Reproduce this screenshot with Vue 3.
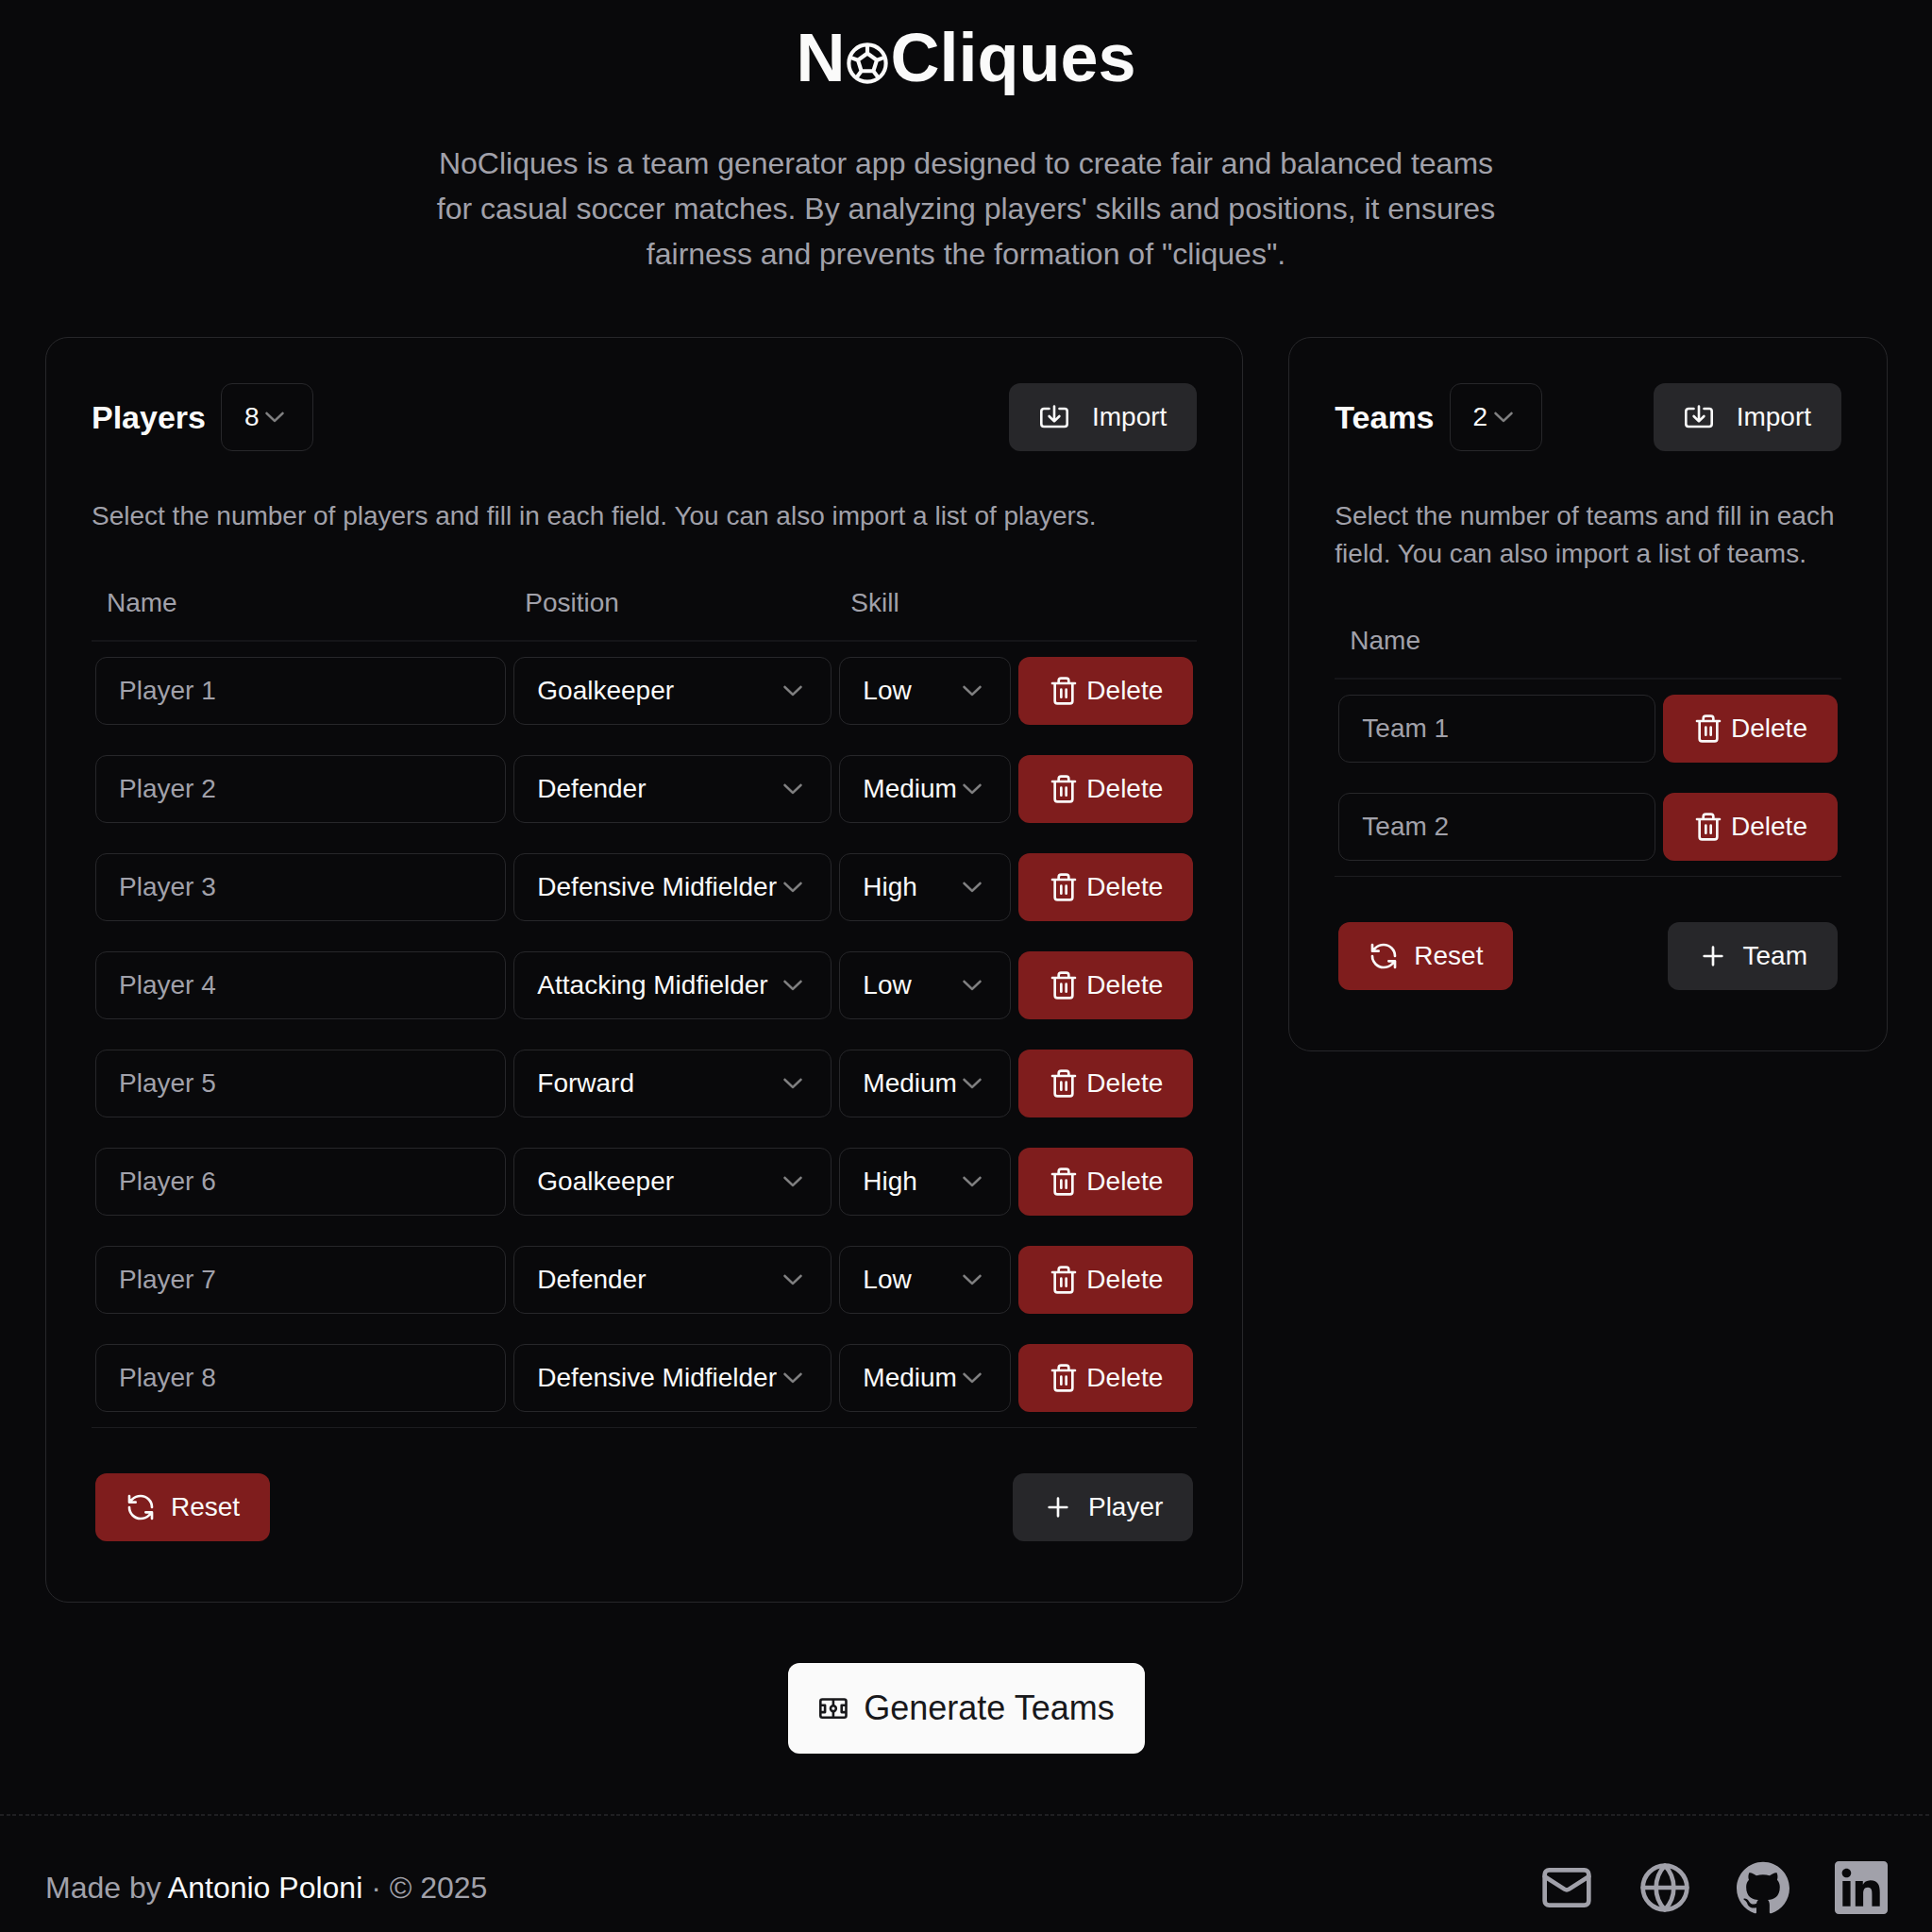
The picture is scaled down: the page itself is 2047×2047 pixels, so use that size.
<script setup>
import { ref } from 'vue'

const positions = ['Goalkeeper', 'Defender', 'Defensive Midfielder', 'Attacking Midfielder', 'Forward']
const skills = ['Low', 'Medium', 'High']

const makePlayer = (i) => ({
  id: i + 1,
  name: '',
  position: positions[i % positions.length],
  skill: skills[i % skills.length],
})
const makeTeam = (i) => ({ id: i + 1, name: '' })

const makeList = (n, make) => Array.from({ length: n }, (_, i) => make(i))

const players = ref(makeList(8, makePlayer))
const teams = ref(makeList(2, makeTeam))

const setPlayers = (n) => { players.value = makeList(Number(n), makePlayer) }
const setTeams = (n) => { teams.value = makeList(Number(n), makeTeam) }
</script>

<template>
  <div class="page">
    <svg class="sprite" aria-hidden="true">
      <symbol id="chevron" viewBox="0 0 15 15">
        <path fill="currentColor" stroke="currentColor" stroke-width="0.2" d="M3.13523 6.15803C3.3241 5.95657 3.64052 5.94637 3.84197 6.13523L7.5 9.56464L11.158 6.13523C11.3595 5.94637 11.6759 5.95657 11.8648 6.15803C12.0536 6.35949 12.0434 6.67591 11.842 6.86477L7.84197 10.6148C7.64964 10.7951 7.35036 10.7951 7.15803 10.6148L3.15803 6.86477C2.95657 6.67591 2.94637 6.35949 3.13523 6.15803Z" />
      </symbol>
      <symbol id="import" viewBox="0 0 32 32">
        <g fill="none" stroke="currentColor" stroke-width="2.6" stroke-linecap="round" stroke-linejoin="round">
          <path d="M10.5 7H5a2.7 2.7 0 0 0-2.7 2.7v13.6A2.7 2.7 0 0 0 5 26h22a2.7 2.7 0 0 0 2.7-2.7V9.7A2.7 2.7 0 0 0 27 7h-5.5" />
          <path d="M16 4.5V20.2M10.6 15L16 20.4L21.4 15" />
        </g>
      </symbol>
      <symbol id="trash" viewBox="0 0 24 24">
        <path fill="none" stroke="currentColor" stroke-width="2" stroke-linecap="round" stroke-linejoin="round" d="M3 6h18M19 6v14a2 2 0 0 1-2 2H7a2 2 0 0 1-2-2V6M8 6V4a2 2 0 0 1 2-2h4a2 2 0 0 1 2 2v2M10 11v6M14 11v6" />
      </symbol>
      <symbol id="refresh" viewBox="0 0 24 24">
        <path fill="none" stroke="currentColor" stroke-width="2" stroke-linecap="round" stroke-linejoin="round" d="M21 12a9 9 0 0 0-9-9 9.75 9.75 0 0 0-6.74 2.74L3 8M3 3v5h5M3 12a9 9 0 0 0 9 9 9.75 9.75 0 0 0 6.74-2.74L21 16M16 16h5v5" />
      </symbol>
      <symbol id="plus" viewBox="0 0 24 24">
        <path fill="none" stroke="currentColor" stroke-width="2" stroke-linecap="round" d="M5 12h14M12 5v14" />
      </symbol>
    </svg>

    <header class="intro">
      <h1 class="logo">N<svg class="ball" viewBox="1 1 22 22" role="img" aria-label="o"><g fill="none" stroke="currentColor" stroke-width="1.9" stroke-linejoin="round"><circle cx="12" cy="12" r="9" /><path d="M12 7.200l4.600 3.300l-1.700 5.300h-5.800l-1.700-5.300zM12 7.200V3M14.900 15.800l2.400 3.200M16.600 10.500l3.900-1.400M9.100 15.800l-2.400 3.200M7.400 10.500l-3.900-1.400" /></g></svg>Cliques</h1>
      <p class="lead">NoCliques is a team generator app designed to create fair and balanced teams for casual soccer matches. By analyzing players' skills and positions, it ensures fairness and prevents the formation of "cliques".</p>
    </header>

    <main class="main">
      <div class="cards">
        <section class="card">
          <div class="card-head">
            <div class="card-title">
              <h2><label for="player-count">Players</label></h2>
              <div class="select count">
                <select id="player-count" :value="players.length" @change="setPlayers($event.target.value)">
                  <option v-for="n in 22" :key="n" :value="n">{{ n }}</option>
                </select>
                <svg class="icon chevron"><use href="#chevron" /></svg>
              </div>
            </div>
            <button type="button" class="btn secondary wide-gap"><svg class="icon"><use href="#import" /></svg>Import</button>
          </div>
          <p class="hint">Select the number of players and fill in each field. You can also import a list of players.</p>
          <table>
            <colgroup>
              <col />
              <col class="col-position" />
              <col class="col-skill" />
              <col class="col-delete" />
            </colgroup>
            <thead>
              <tr><th scope="col">Name</th><th scope="col">Position</th><th scope="col">Skill</th><th></th></tr>
            </thead>
            <tbody>
              <tr v-for="(p, i) in players" :key="p.id">
                <td><input v-model="p.name" type="text" :placeholder="`Player ${i + 1}`" :aria-label="`Player ${i + 1} name`" /></td>
                <td>
                  <div class="select">
                    <select v-model="p.position" :aria-label="`Player ${i + 1} position`">
                      <option v-for="o in positions" :key="o">{{ o }}</option>
                    </select>
                    <svg class="icon chevron"><use href="#chevron" /></svg>
                  </div>
                </td>
                <td>
                  <div class="select">
                    <select v-model="p.skill" :aria-label="`Player ${i + 1} skill`">
                      <option v-for="o in skills" :key="o">{{ o }}</option>
                    </select>
                    <svg class="icon chevron"><use href="#chevron" /></svg>
                  </div>
                </td>
                <td><button type="button" class="btn danger tight" @click="players.splice(i, 1)"><svg class="icon"><use href="#trash" /></svg>Delete</button></td>
              </tr>
            </tbody>
          </table>
          <div class="card-foot">
            <button type="button" class="btn danger" @click="setPlayers(8)"><svg class="icon"><use href="#refresh" /></svg>Reset</button>
            <button type="button" class="btn secondary" @click="players.push(makePlayer(players.length))"><svg class="icon"><use href="#plus" /></svg>Player</button>
          </div>
        </section>

        <section class="card">
          <div class="card-head">
            <div class="card-title">
              <h2><label for="team-count">Teams</label></h2>
              <div class="select count">
                <select id="team-count" :value="teams.length" @change="setTeams($event.target.value)">
                  <option v-for="n in 8" :key="n" :value="n">{{ n }}</option>
                </select>
                <svg class="icon chevron"><use href="#chevron" /></svg>
              </div>
            </div>
            <button type="button" class="btn secondary wide-gap"><svg class="icon"><use href="#import" /></svg>Import</button>
          </div>
          <p class="hint">Select the number of teams and fill in each field. You can also import a list of teams.</p>
          <table>
            <colgroup>
              <col />
              <col class="col-delete" />
            </colgroup>
            <thead>
              <tr><th scope="col">Name</th><th></th></tr>
            </thead>
            <tbody>
              <tr v-for="(t, i) in teams" :key="t.id">
                <td><input v-model="t.name" type="text" :placeholder="`Team ${i + 1}`" :aria-label="`Team ${i + 1} name`" /></td>
                <td><button type="button" class="btn danger tight" @click="teams.splice(i, 1)"><svg class="icon"><use href="#trash" /></svg>Delete</button></td>
              </tr>
            </tbody>
          </table>
          <div class="card-foot">
            <button type="button" class="btn danger" @click="setTeams(2)"><svg class="icon"><use href="#refresh" /></svg>Reset</button>
            <button type="button" class="btn secondary" @click="teams.push(makeTeam(teams.length))"><svg class="icon"><use href="#plus" /></svg>Team</button>
          </div>
        </section>
      </div>

      <button type="button" class="btn generate">
        <svg class="icon" viewBox="0 0 32 32" fill="none" stroke="currentColor" stroke-width="2.6" stroke-linejoin="round">
          <rect x="2.3" y="6.5" width="27.2" height="19.3" rx="2" />
          <path d="M15.9 6.5v6.8M15.9 19.2v6.6M2.3 12.7h4.8v7.4H2.3M29.5 12.7h-4.8v7.4h4.8" />
          <circle cx="15.9" cy="16.2" r="2.9" />
        </svg>Generate Teams
      </button>
    </main>

    <footer class="footer">
      <p>Made by <a href="#author">Antonio Poloni</a> · © 2025</p>
      <nav class="links" aria-label="Contact">
        <a href="#mail" aria-label="Email">
          <svg viewBox="0 0 24 24" fill="none" stroke="currentColor" stroke-width="2" stroke-linecap="round" stroke-linejoin="round"><rect x="2" y="4" width="20" height="16" rx="2" /><path d="M22 7l-8.97 5.7a1.94 1.94 0 0 1-2.06 0L2 7" /></svg>
        </a>
        <a href="#website" aria-label="Website">
          <svg viewBox="0 0 24 24" fill="none" stroke="currentColor" stroke-width="2" stroke-linecap="round" stroke-linejoin="round"><circle cx="12" cy="12" r="10" /><path d="M12 2a14.5 14.5 0 0 0 0 20 14.5 14.5 0 0 0 0-20M2 12h20" /></svg>
        </a>
        <a href="#github" aria-label="GitHub">
          <svg viewBox="0 0 24 24" fill="currentColor"><path d="M12 .297c-6.63 0-12 5.373-12 12 0 5.303 3.438 9.8 8.205 11.385.6.113.82-.258.82-.577 0-.285-.01-1.04-.015-2.04-3.338.724-4.042-1.61-4.042-1.61C4.422 18.07 3.633 17.7 3.633 17.7c-1.087-.744.084-.729.084-.729 1.205.084 1.838 1.236 1.838 1.236 1.07 1.835 2.809 1.305 3.495.998.108-.776.417-1.305.76-1.605-2.665-.3-5.466-1.332-5.466-5.93 0-1.31.465-2.38 1.235-3.22-.135-.303-.54-1.523.105-3.176 0 0 1.005-.322 3.3 1.23.96-.267 1.98-.399 3-.405 1.02.006 2.04.138 3 .405 2.28-1.552 3.285-1.23 3.285-1.23.645 1.653.24 2.873.12 3.176.765.84 1.23 1.91 1.23 3.22 0 4.61-2.805 5.625-5.475 5.92.42.36.81 1.096.81 2.22 0 1.606-.015 2.896-.015 3.286 0 .315.21.69.825.57C20.565 22.092 24 17.592 24 12.297c0-6.627-5.373-12-12-12" /></svg>
        </a>
        <a href="#linkedin" aria-label="LinkedIn">
          <svg viewBox="0 0 24 24" fill="currentColor"><path d="M20.447 20.452h-3.554v-5.569c0-1.328-.027-3.037-1.852-3.037-1.853 0-2.136 1.445-2.136 2.939v5.667H9.351V9h3.414v1.561h.046c.477-.9 1.637-1.85 3.37-1.85 3.601 0 4.267 2.37 4.267 5.455v6.286zM5.337 7.433c-1.144 0-2.063-.926-2.063-2.065 0-1.138.92-2.063 2.063-2.063 1.14 0 2.064.925 2.064 2.063 0 1.139-.925 2.065-2.064 2.065zm1.782 13.019H3.555V9h3.564v11.452zM22.225 0H1.771C.792 0 0 .774 0 1.729v20.542C0 23.227.792 24 1.771 24h20.451C23.2 24 24 23.227 24 22.271V1.729C24 .774 23.2 0 22.222 0h.003z" /></svg>
        </a>
      </nav>
    </footer>
  </div>
</template>

<style>
body {
  margin: 0;
  background: #09090b;
}
</style>

<style scoped>
.page {
  --fg: #fafafa;
  --muted: #a1a1aa;
  --border: #27272a;
  min-height: 100vh;
  background: #09090b;
  color: var(--fg);
  font-family: "Liberation Sans", Arial, sans-serif;
  font-size: 28px;
  line-height: 40px;
}
.page * {
  box-sizing: border-box;
}
.sprite {
  position: absolute;
  width: 0;
  height: 0;
}
h1,
h2,
p {
  margin: 0;
}

.intro {
  display: flex;
  flex-direction: column;
  align-items: center;
  gap: 52px;
  padding: 25px 48px 64px;
}
.logo {
  font-size: 72px;
  line-height: 72px;
  font-weight: 700;
}
.ball {
  width: 48px;
  height: 48px;
  vertical-align: -5px;
}
.lead {
  max-width: 1152px;
  color: var(--muted);
  font-size: 32px;
  line-height: 48px;
  text-align: center;
}

.main {
  display: flex;
  flex-direction: column;
  align-items: center;
  gap: 64px;
  padding: 0 47px 64px 48px;
}
.cards {
  display: grid;
  grid-template-columns: minmax(0, 2fr) minmax(0, 1fr);
  align-items: start;
  gap: 48px;
  width: 100%;
}
.card {
  padding: 48px 48px 64px;
  border: 1px solid var(--border);
  border-radius: 24px;
}
.card-head,
.card-foot {
  display: flex;
  align-items: center;
  justify-content: space-between;
}
.card-title {
  display: flex;
  align-items: center;
  gap: 16px;
}
.card-title h2 {
  font-size: 34px;
  line-height: 40px;
  font-weight: 700;
}
.card-foot {
  padding: 48px 4px 0;
}
.hint {
  margin: 49px 0 32px;
  color: var(--muted);
}

.btn {
  display: inline-flex;
  align-items: center;
  justify-content: center;
  gap: 16px;
  height: 72px;
  padding: 0 32px;
  border: 0;
  border-radius: 12px;
  color: var(--fg);
  font: inherit;
  white-space: nowrap;
  cursor: pointer;
}
.btn.wide-gap {
  gap: 24px;
}
.btn.tight {
  gap: 8px;
  width: 100%;
}
.secondary {
  background: #27272a;
}
.danger {
  background: #7f1d1d;
}
.generate {
  height: 96px;
  background: #fafafa;
  color: #18181b;
  font-size: 36px;
}
.icon {
  flex: none;
  width: 32px;
  height: 32px;
}

table {
  width: 100%;
  table-layout: fixed;
  border-collapse: separate;
  border-spacing: 0;
  border-bottom: 1px solid #1c1c1f;
}
.col-position {
  width: 345px;
}
.col-skill {
  width: 190px;
}
.col-delete {
  width: 193px;
}
th {
  height: 81px;
  padding: 0 16px;
  border-bottom: 2px solid #151518;
  color: var(--muted);
  font-weight: 400;
  text-align: left;
}
td {
  height: 104px;
  padding: 0 4px;
}

input,
select {
  display: block;
  width: 100%;
  height: 72px;
  padding: 0 24px;
  border: 1px solid var(--border);
  border-radius: 12px;
  background: transparent;
  color: var(--fg);
  font: inherit;
}
input::placeholder {
  color: var(--muted);
  opacity: 1;
}
select {
  padding-right: 48px;
  appearance: none;
}
option {
  background: #09090b;
}
.select {
  position: relative;
}
.count {
  width: 98px;
}
.chevron {
  position: absolute;
  top: 18px;
  right: 25px;
  opacity: 0.5;
  pointer-events: none;
}

.footer {
  display: flex;
  flex-wrap: wrap;
  align-items: center;
  justify-content: space-between;
  padding: 50px 47px 16px 48px;
  background: repeating-linear-gradient(90deg, #1f1f22 0 4px, transparent 4px 7px, #1f1f22 7px 11px, transparent 11px 13px, #1f1f22 13px 17px, transparent 17px 20px) top left / 100% 2px no-repeat;
  color: var(--muted);
  font-size: 32px;
}
.footer a {
  color: var(--fg);
  text-decoration: none;
}
.links {
  display: flex;
  gap: 48px;
}
.footer .links a {
  color: var(--muted);
}
.links svg {
  display: block;
  width: 56px;
  height: 56px;
}
</style>
